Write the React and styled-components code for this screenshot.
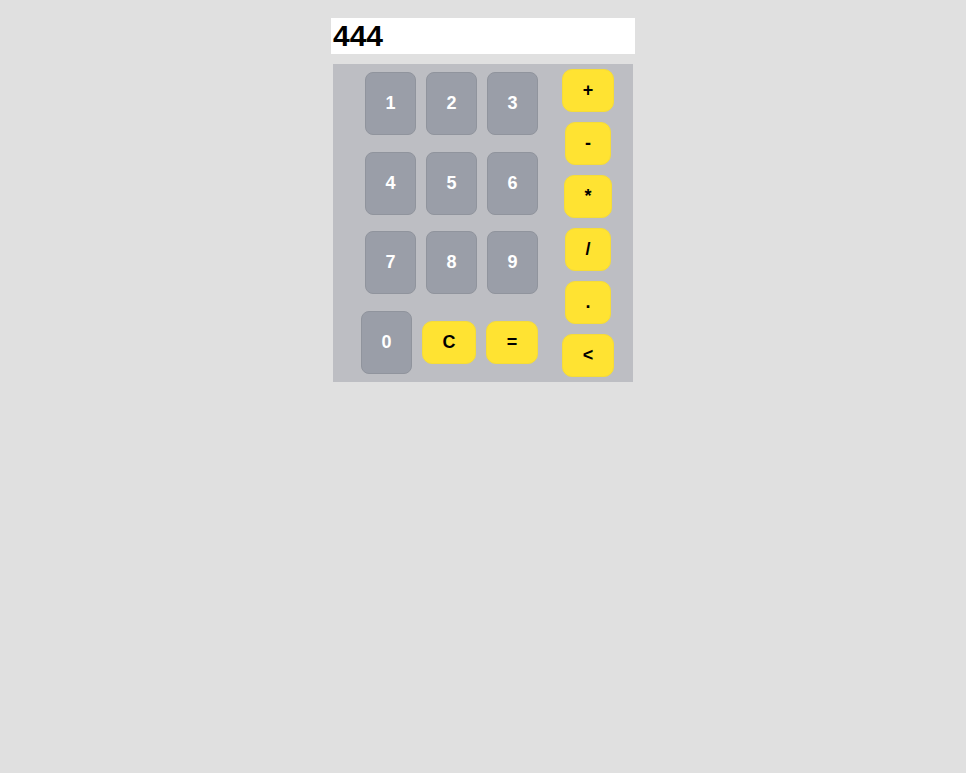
import React, { useState } from "react";
import styled, { createGlobalStyle } from "styled-components";

const GlobalStyle = createGlobalStyle`
  body {
    margin: 0;
    padding: 18px 0;
    background-color: #e0e0e0;
    font-family: "Liberation Sans", Arial, sans-serif;
  }
`;

const Calculator = styled.div`
  width: 304px;
  margin: 0 auto;
  display: flex;
  flex-direction: column;
  align-items: center;
  gap: 10px;
`;

const Display = styled.div`
  width: 304px;
  height: 36px;
  box-sizing: border-box;
  background-color: #ffffff;
  padding-left: 2px;
  font-size: 30px;
  font-weight: bold;
  line-height: 36px;
  color: #000000;
`;

const Panel = styled.div`
  width: 300px;
  box-sizing: border-box;
  background-color: #bdbec3;
  padding: 5px 19px 5px 28px;
  display: flex;
  justify-content: space-between;
`;

const Keypad = styled.div`
  display: flex;
  flex-direction: column;
  align-items: flex-end;
  gap: 16.67px;
  padding: 3px 0;
`;

const Row = styled.div`
  display: flex;
  align-items: center;
  gap: 10px;
`;

const Operators = styled.div`
  display: flex;
  flex-direction: column;
  align-items: center;
  justify-content: center;
  gap: 10px;
`;

const NumberKey = styled.button`
  width: 51px;
  height: 63px;
  box-sizing: border-box;
  border: 1px solid #90949d;
  border-radius: 8px;
  background-color: #9a9ea8;
  color: #ffffff;
  font-family: "Liberation Sans", Arial, sans-serif;
  font-size: 18px;
  font-weight: bold;
  padding: 0;
  cursor: pointer;
`;

const YellowKey = styled.button`
  width: ${({ $w }) => $w}px;
  height: 43px;
  box-sizing: border-box;
  border: 1px solid #f5dc38;
  border-radius: 10px;
  background-color: #ffe332;
  color: #000000;
  font-family: "Liberation Sans", Arial, sans-serif;
  font-size: 18px;
  font-weight: bold;
  padding: 0;
  cursor: pointer;
`;

const rows = [
  ["1", "2", "3"],
  ["4", "5", "6"],
  ["7", "8", "9"],
];

const operators = [
  { key: "+", w: 52 },
  { key: "-", w: 46 },
  { key: "*", w: 48 },
  { key: "/", w: 46 },
  { key: ".", w: 46 },
  { key: "<", w: 52 },
];

export default function App() {
  const [value, setValue] = useState("444");

  const press = (key) => {
    if (key === "C") setValue("");
    else if (key === "<") setValue((v) => v.slice(0, -1));
    else if (key === "=") {
      try {
        // eslint-disable-next-line no-new-func
        setValue(String(Function(`return (${value})`)()));
      } catch (e) {
        setValue("Error");
      }
    } else setValue((v) => v + key);
  };

  return (
    <>
      <GlobalStyle />
      <Calculator>
        <Display>{value}</Display>
        <Panel>
          <Keypad>
            {rows.map((row) => (
              <Row key={row[0]}>
                {row.map((n) => (
                  <NumberKey key={n} onClick={() => press(n)}>
                    {n}
                  </NumberKey>
                ))}
              </Row>
            ))}
            <Row>
              <NumberKey onClick={() => press("0")}>0</NumberKey>
              <YellowKey $w={54} onClick={() => press("C")}>C</YellowKey>
              <YellowKey $w={52} onClick={() => press("=")}>=</YellowKey>
            </Row>
          </Keypad>
          <Operators>
            {operators.map((op) => (
              <YellowKey key={op.key} $w={op.w} onClick={() => press(op.key)}>
                {op.key}
              </YellowKey>
            ))}
          </Operators>
        </Panel>
      </Calculator>
    </>
  );
}
